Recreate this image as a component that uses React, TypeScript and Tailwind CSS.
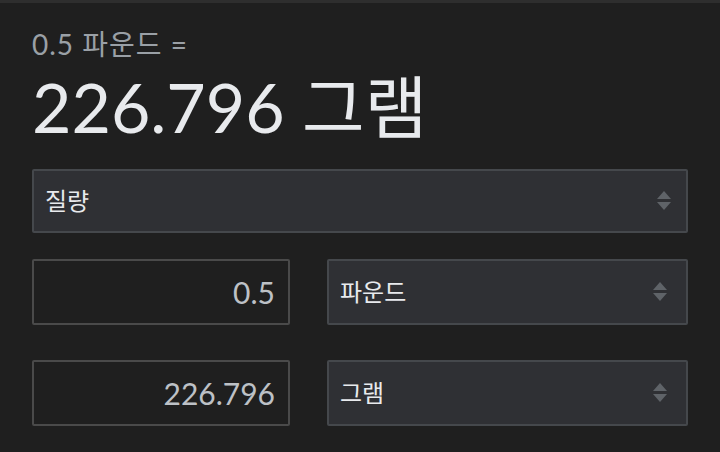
import React from 'react';

const font = { fontFamily: '"Lato", "Noto Sans CJK KR", sans-serif' };

function Arrows() {
  return (
    <svg width="16" height="24" viewBox="0 0 16 24" className="shrink-0">
      <path d="M8 2 L15 10 H1 Z" fill="#5f6368" />
      <path d="M1 13 H15 L8 21 Z" fill="#5f6368" />
    </svg>
  );
}

function Select({ label, className }: { label: string; className: string }) {
  return (
    <div
      className={`flex items-center justify-between rounded-[2px] border-2 border-[#45484c] bg-[#2f3034] pl-[11px] text-[24px] text-[#e8eaed] ${className}`}
    >
      <span className="leading-none">{label}</span>
      <Arrows />
    </div>
  );
}

function NumberBox({ value }: { value: string }) {
  return (
    <div className="flex h-[66px] w-[258px] items-center justify-end rounded-[2px] border-2 border-[#4a4a4a] bg-[#1f1f1f] pr-[13px] text-[30px] text-[#bdc1c6]">
      <span className="leading-none">{value}</span>
    </div>
  );
}

export default function App() {
  return (
    <div style={font} className="h-[452px] w-[720px] overflow-hidden border-t-[3px] border-[#2e2e2e] bg-[#1f1f1f] pl-[32px] pr-[32px]">
      <div className="pt-[24px] text-[28px] leading-[34px] tracking-[1px] text-[#9aa0a6]">0.5 파운드 =</div>
      <div className="mt-[6px] text-[68px] leading-[80px] text-[#e8eaed]">226.796 그램</div>
      <Select label="질량" className="mt-[22px] h-[64px] w-[656px] pr-[14px]" />
      <div className="mt-[26px] flex gap-[37px]">
        <NumberBox value="0.5" />
        <Select label="파운드" className="h-[66px] w-[361px] pr-[18px]" />
      </div>
      <div className="mt-[35px] flex gap-[37px]">
        <NumberBox value="226.796" />
        <Select label="그램" className="h-[66px] w-[361px] pr-[18px]" />
      </div>
    </div>
  );
}
